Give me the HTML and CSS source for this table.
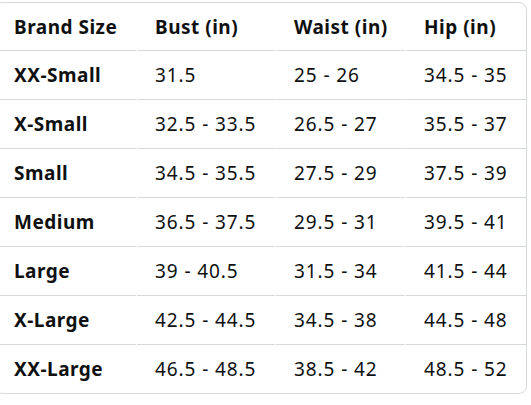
FILE: index.html
```html
<!DOCTYPE html>
<html lang="en">
<head>
<meta charset="utf-8">
<link rel="stylesheet" href="styles.css">
</head>
<body>
<div class="chart">
  <table class="size-table">
    <colgroup>
      <col class="c1"><col class="c2"><col class="c3"><col class="c4">
    </colgroup>
    <thead>
      <tr><th>Brand Size</th><th>Bust (in)</th><th>Waist (in)</th><th>Hip (in)</th></tr>
    </thead>
    <tbody>
      <tr><th>XX-Small</th><td>31.5</td><td>25 - 26</td><td>34.5 - 35</td></tr>
      <tr><th>X-Small</th><td>32.5 - 33.5</td><td>26.5 - 27</td><td>35.5 - 37</td></tr>
      <tr><th>Small</th><td>34.5 - 35.5</td><td>27.5 - 29</td><td>37.5 - 39</td></tr>
      <tr><th>Medium</th><td>36.5 - 37.5</td><td>29.5 - 31</td><td>39.5 - 41</td></tr>
      <tr><th>Large</th><td>39 - 40.5</td><td>31.5 - 34</td><td>41.5 - 44</td></tr>
      <tr><th>X-Large</th><td>42.5 - 44.5</td><td>34.5 - 38</td><td>44.5 - 48</td></tr>
      <tr class="last"><th>XX-Large</th><td>46.5 - 48.5</td><td>38.5 - 42</td><td>48.5 - 52</td></tr>
    </tbody>
  </table>
</div>
</body>
</html>
```
FILE: styles.css
```css
html, body {
  margin: 0;
  padding: 0;
  background: #ffffff;
}
body {
  padding-top: 2px;
  font-family: "Noto Sans", "DejaVu Sans", sans-serif;
  color: #0f1111;
}
.chart {
  margin-left: -5px;
  width: 532px;
  border: 1px solid #d5d9d9;
  border-radius: 8px;
  overflow: hidden;
  box-sizing: border-box;
}
.size-table {
  width: 530px;
  table-layout: fixed;
  border-collapse: separate;
  border-spacing: 1px 0;
  margin: 0 -1px;
}
.c1 { width: 140px; }
.c2 { width: 138px; }
.c3 { width: 129px; }
.c4 { width: 120px; }
.size-table th,
.size-table td {
  height: 48px;
  padding: 0 0 0 18px;
  text-align: left;
  vertical-align: middle;
  font-size: 19px;
  line-height: 24px;
  border-bottom: 1px solid #d5d9d9;
  white-space: nowrap;
  box-sizing: content-box;
}
.size-table thead th {
  height: 47px;
}
.size-table th {
  font-weight: 700;
  letter-spacing: 0.5px;
}
.size-table td {
  font-weight: 400;
  letter-spacing: 0.9px;
}
.size-table tr.last th,
.size-table tr.last td {
  border-bottom: none;
}
```
